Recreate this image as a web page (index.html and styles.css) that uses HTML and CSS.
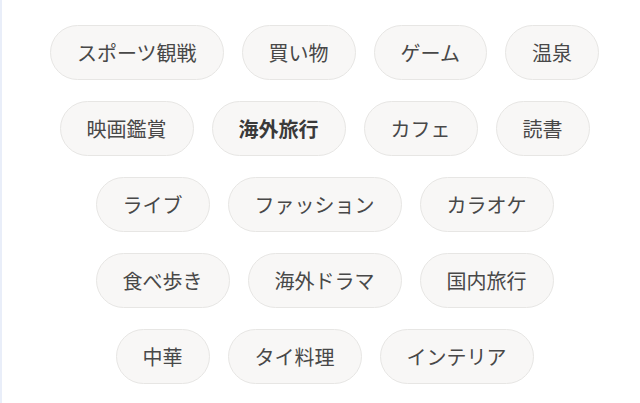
FILE: index.html
```html
<!DOCTYPE html>
<html lang="ja">
<head>
    <meta charset="utf-8">
    <title>趣味タグ</title>
    <link rel="stylesheet" href="styles.css">
</head>
<body>
    <div class="page">
        <div class="side-edge"></div>

        <!-- interest tags -->
        <div class="tag-area">
            <div class="tag-row">
                <span class="tag">スポーツ観戦</span>
                <span class="tag">買い物</span>
                <span class="tag">ゲーム</span>
                <span class="tag">温泉</span>
            </div>
            <div class="tag-row">
                <span class="tag">映画鑑賞</span>
                <span class="tag selected">海外旅行</span>
                <span class="tag">カフェ</span>
                <span class="tag">読書</span>
            </div>
            <div class="tag-row">
                <span class="tag">ライブ</span>
                <span class="tag">ファッション</span>
                <span class="tag">カラオケ</span>
            </div>
            <div class="tag-row">
                <span class="tag">食べ歩き</span>
                <span class="tag">海外ドラマ</span>
                <span class="tag">国内旅行</span>
            </div>
            <div class="tag-row">
                <span class="tag">中華</span>
                <span class="tag">タイ料理</span>
                <span class="tag">インテリア</span>
            </div>
        </div>
    </div>
</body>
</html>
```

FILE: styles.css
```css
html, body {
    margin: 0;
    padding: 0;
    background-color: #ffffff;
}
body {
    font-family: "Noto Sans CJK JP", "Noto Sans", sans-serif;
    color: #484848;
}
.page {
    display: flex;
    height: 403px;
}
.side-edge {
    width: 2px;
    background-color: #e9eef9;
}
.tag-area {
    flex: 1;
    display: flex;
    flex-direction: column;
    gap: 21px;
    padding: 25px 0 0 7px;
}
.tag-row {
    display: flex;
    justify-content: center;
    gap: 18px;
}
.tag {
    display: flex;
    align-items: center;
    height: 53px;
    padding: 0 26px;
    font-size: 20px;
    line-height: 1;
    background-color: #f8f7f6;
    border: 1px solid #e7e6e4;
    border-radius: 28px;
    white-space: nowrap;
}
.tag.selected {
    font-weight: bold;
    color: #3a3a3a;
}
```
